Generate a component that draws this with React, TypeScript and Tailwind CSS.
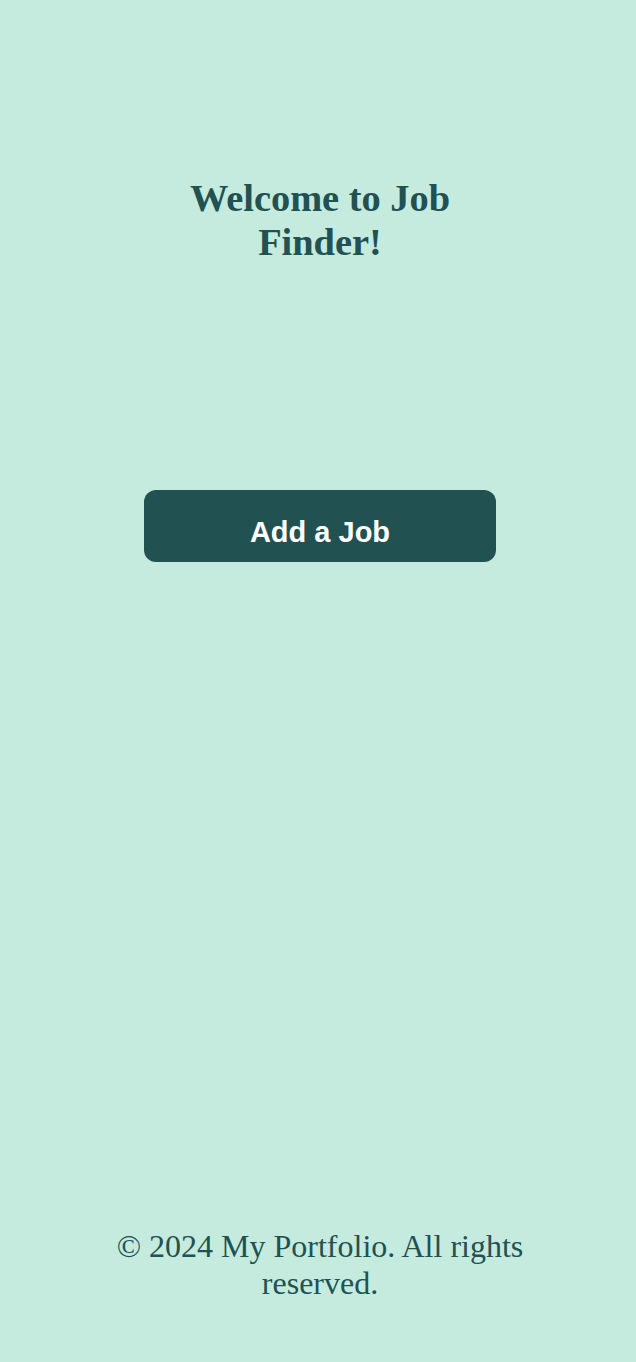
const App = () => {
  return (
    <div className="min-h-screen bg-[#c4ebde] flex flex-col pl-1 text-[#225152]">
      <main className="flex-1 flex flex-col items-center pt-[176px]">
        <h1 className="w-[300px] text-center font-['Liberation_Serif',serif] font-bold text-[38.4px] leading-[1.15]">
          Welcome to Job Finder!
        </h1>
        <button className="mt-[226px] w-[352px] h-[72px] rounded-xl bg-[#225152] text-white font-['Liberation_Sans',Arial,sans-serif] font-bold text-[29px] pt-[21px] pb-4">
          Add a Job
        </button>
      </main>
      <footer className="w-[460px] mx-auto text-center pb-[60px] font-['Liberation_Serif',serif] text-[32px] leading-[1.15]">
        © 2024 My Portfolio. All rights reserved.
      </footer>
    </div>
  )
}

export default App
